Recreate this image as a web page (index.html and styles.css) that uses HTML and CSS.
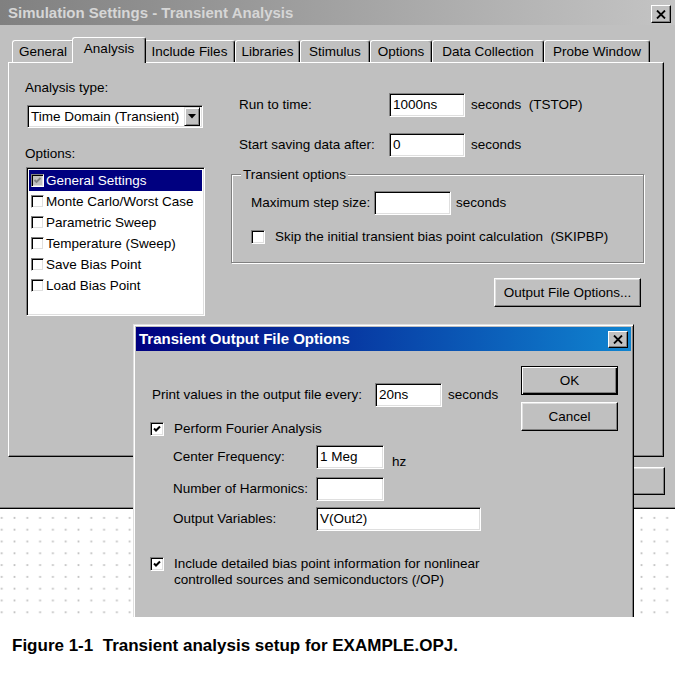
FILE: index.html
```html
<!DOCTYPE html>
<html>
<head>
<meta charset="utf-8">
<link rel="stylesheet" href="styles.css">
</head>
<body>
<div class="screen">
  <div class="main">
    <div class="titlebar inactive">
      <span class="title">Simulation Settings - Transient Analysis</span>
      <span class="close"><svg width="10" height="9" viewBox="0 0 10 9"><path d="M1 0.5 L9 8.5 M9 0.5 L1 8.5" stroke="#000" stroke-width="1.8" fill="none"/></svg></span>
    </div>
    <div class="tabs">
      <div class="tab">General</div>
      <div class="tab active">Analysis</div>
      <div class="tab">Include Files</div>
      <div class="tab">Libraries</div>
      <div class="tab">Stimulus</div>
      <div class="tab">Options</div>
      <div class="tab">Data Collection</div>
      <div class="tab">Probe Window</div>
    </div>
    <div class="panel">
      <div class="col-left">
        <div class="lbl">Analysis type:</div>
        <div class="dropdown">
          <span class="dd-text">Time Domain (Transient)</span>
          <span class="dd-btn"><svg width="8" height="5" viewBox="0 0 8 5"><path d="M0 0 H8 L4 4.5 Z" fill="#000"/></svg></span>
        </div>
        <div class="lbl opt-lbl">Options:</div>
        <div class="listbox">
          <div class="item selected"><span class="cb cb-dis"><svg width="9" height="9" viewBox="0 0 9 9"><path d="M1.5 4 L3.5 6 L7.5 2" stroke="#808080" stroke-width="1.8" fill="none"/></svg></span>General Settings</div>
          <div class="item"><span class="cb"></span>Monte Carlo/Worst Case</div>
          <div class="item"><span class="cb"></span>Parametric Sweep</div>
          <div class="item"><span class="cb"></span>Temperature (Sweep)</div>
          <div class="item"><span class="cb"></span>Save Bias Point</div>
          <div class="item"><span class="cb"></span>Load Bias Point</div>
        </div>
      </div>
      <div class="col-right">
        <div class="row row-run">
          <span class="rlbl">Run to time:</span>
          <span class="field f-run">1000ns</span>
          <span class="suffix">seconds&nbsp; (TSTOP)</span>
        </div>
        <div class="row row-save">
          <span class="rlbl">Start saving data after:</span>
          <span class="field f-run">0</span>
          <span class="suffix">seconds</span>
        </div>
        <div class="group">
          <div class="legend">Transient options</div>
          <div class="row row-step">
            <span class="slbl">Maximum step size:</span>
            <span class="field f-step"></span>
            <span class="suffix s5">seconds</span>
          </div>
          <div class="row row-skip">
            <span class="cb cb14"></span>
            <span class="cblbl">Skip the initial transient bias point calculation&nbsp; (SKIPBP)</span>
          </div>
        </div>
        <div class="btn btn-ofo">Output File Options...</div>
      </div>
    </div>
    <div class="btn-row">
      <div class="btn btn-main"></div>
      <div class="btn btn-main"></div>
      <div class="btn btn-main"></div>
      <div class="btn btn-main"></div>
    </div>
  </div>
  <div class="dots"></div>
  <div class="caption">Figure 1-1&nbsp; Transient analysis setup for EXAMPLE.OPJ.</div>

  <div class="child">
    <div class="titlebar active-tb">
      <span class="title">Transient Output File Options</span>
      <span class="close close-child"><svg width="10" height="9" viewBox="0 0 10 9"><path d="M1 0.5 L9 8.5 M9 0.5 L1 8.5" stroke="#000" stroke-width="1.8" fill="none"/></svg></span>
    </div>
    <div class="child-body">
      <div class="child-left">
        <div class="row row-print">
          <span class="plbl">Print values in the output file every:</span>
          <span class="field f-print">20ns</span>
          <span class="suffix">seconds</span>
        </div>
        <div class="row row-four">
          <span class="cb cb14"><svg width="10" height="10" viewBox="0 0 10 10"><path d="M2 4.5 L4 6.5 L8 2.5" stroke="#000" stroke-width="2" fill="none"/></svg></span>
          <span class="cblbl">Perform Fourier Analysis</span>
        </div>
        <div class="row row-sub row-cf">
          <span class="sublbl">Center Frequency:</span>
          <span class="field f-sub">1 Meg</span>
          <span class="hz">hz</span>
        </div>
        <div class="row row-sub row-nh">
          <span class="sublbl">Number of Harmonics:</span>
          <span class="field f-sub"></span>
        </div>
        <div class="row row-sub row-ov">
          <span class="sublbl">Output Variables:</span>
          <span class="field f-ov">V(Out2)</span>
        </div>
        <div class="row-inc">
          <span class="cb cb14"><svg width="10" height="10" viewBox="0 0 10 10"><path d="M2 4.5 L4 6.5 L8 2.5" stroke="#000" stroke-width="2" fill="none"/></svg></span>
          <span class="inc-text">Include detailed bias point information for nonlinear<br>controlled sources and semiconductors (/OP)</span>
        </div>
      </div>
      <div class="child-right">
        <div class="btn btn-default">OK</div>
        <div class="btn btn-cancel">Cancel</div>
      </div>
    </div>
  </div>
</div>
</body>
</html>
```

FILE: styles.css
```css
* { box-sizing: border-box; }
html, body { margin: 0; padding: 0; }
body {
  width: 675px; height: 673px; overflow: hidden; background: #fff;
  font-family: "Liberation Sans", Arial, sans-serif; font-size: 13.5px; color: #000;
  line-height: 16px;
}
.screen { position: relative; width: 675px; height: 673px; overflow: hidden; }

/* main dialog */
.main {
  height: 509px; background: #c0c0c0;
  border-bottom: 1px solid #000; box-shadow: inset 0 -1px 0 #808080;
  display: flex; flex-direction: column;
}
.titlebar {
  height: 25px; flex: none; display: flex; align-items: center;
  justify-content: space-between; padding: 0 4px 0 8px;
}
.titlebar.inactive { background: linear-gradient(to right, #808080, #c4c4c4); color: #d6d6d6; }
.title { font-weight: bold; font-size: 15px; white-space: nowrap; }
.close {
  width: 20px; height: 18px; margin-top: 3px; background: #c0c0c0;
  border-top: 1px solid #fff; border-left: 1px solid #fff;
  border-right: 1px solid #000; border-bottom: 1px solid #000;
  box-shadow: inset -1px -1px 0 #808080;
  display: flex; align-items: center; justify-content: center;
}

.tabs {
  display: flex; align-items: flex-end; height: 25px; margin-top: 12px;
  padding-left: 12px; position: relative; z-index: 1; flex: none;
}
.tab {
  height: 22px; background: #c0c0c0; white-space: nowrap;
  border-top: 1px solid #fff; border-left: 1px solid #fff; border-right: 1px solid #000;
  box-shadow: inset -1px 0 0 #808080; border-radius: 3px 3px 0 0;
  display: flex; align-items: center; justify-content: center; padding-top: 1px;
}
.tab:nth-child(1) { width: 62px; }
.tab:nth-child(2) { width: 74px; }
.tab:nth-child(3) { width: 91px; }
.tab:nth-child(4) { width: 65px; }
.tab:nth-child(5) { width: 70px; }
.tab:nth-child(6) { width: 62px; }
.tab:nth-child(7) { width: 112px; }
.tab:nth-child(8) { width: 106px; }
.tab.active {
  height: 26px; margin: 0 -2px -1px; position: relative; z-index: 2;
  align-items: flex-start; padding-top: 3px;
}

.panel {
  flex: none; margin-left: 8px; width: 656px; height: 395px;
  border-top: 1px solid #fff; border-left: 1px solid #fff;
  border-right: 1px solid #000; border-bottom: 1px solid #000;
  box-shadow: inset -1px -1px 0 #808080;
  display: flex; padding: 17px 0 0 16px;
}
.col-left { width: 206px; flex: none; display: flex; flex-direction: column; align-items: flex-start; }
.col-right { width: 413px; flex: none; display: flex; flex-direction: column; }

.lbl { height: 16px; white-space: nowrap; }
.opt-lbl { margin-top: 18px; }

.field, .dropdown, .listbox, .cb {
  background: #fff;
  border-top: 1px solid #808080; border-left: 1px solid #808080;
  border-right: 1px solid #fff; border-bottom: 1px solid #fff;
  box-shadow: inset 1px 1px 0 #000, inset -1px -1px 0 #dfdfdf;
}
.dropdown {
  margin-top: 9px; margin-left: 2px; width: 176px; height: 23px;
  display: flex; align-items: center; justify-content: space-between;
  padding: 2px 2px 2px 3px;
}
.dd-text { white-space: nowrap; }
.dd-btn {
  width: 16px; height: 19px; background: #c0c0c0;
  border-top: 1px solid #dfdfdf; border-left: 1px solid #dfdfdf;
  border-right: 1px solid #000; border-bottom: 1px solid #000;
  box-shadow: inset 1px 1px 0 #fff, inset -1px -1px 0 #808080;
  display: flex; align-items: center; justify-content: center;
}

.listbox {
  margin-top: 5px; margin-left: 1px; width: 179px; height: 149px; padding: 2px;
}
.item {
  height: 21px; display: flex; align-items: center; gap: 2px; padding-left: 2px;
  white-space: nowrap;
}
.item.selected { background: #000080; color: #fff; }
.cb { width: 13px; height: 13px; flex: none; display: flex; align-items: center; justify-content: center; }
.cb-dis { background: #c0c0c0; }
.cb14 { width: 14px; height: 14px; }

.row { display: flex; align-items: center; height: 24px; white-space: nowrap; }
.row-run { margin-top: 13px; padding-left: 8px; }
.row-save { margin-top: 16px; padding-left: 8px; }
.rlbl { width: 150px; flex: none; }
.field { height: 24px; flex: none; display: flex; align-items: center; padding: 0 2px 0 3px; white-space: nowrap; }
.f-run { width: 76px; }
.suffix { margin-left: 6px; }
.s5 { margin-left: 5px; }

.group {
  margin-top: 17px; height: 89px;
  border: 1px solid #808080; box-shadow: inset 1px 1px 0 #fff, 1px 1px 0 #fff;
  padding-left: 19px; display: flex; flex-direction: column; align-items: flex-start;
}
.legend {
  margin: -8px 0 0 -10px; padding: 0 2px; background: #c0c0c0; height: 16px; white-space: nowrap;
}
.row-step { margin-top: 8px; }
.slbl { width: 123px; flex: none; }
.f-step { width: 77px; }
.row-skip { margin-top: 14px; height: 16px; }
.cblbl { margin-left: 10px; }

.btn {
  background: #c0c0c0; white-space: nowrap;
  border-top: 1px solid #fff; border-left: 1px solid #fff;
  border-right: 1px solid #000; border-bottom: 1px solid #000;
  box-shadow: inset -1px -1px 0 #808080, inset 1px 1px 0 #dfdfdf;
  display: flex; align-items: center; justify-content: center;
}
.btn-ofo { margin-top: 15px; align-self: flex-end; margin-right: 3px; width: 147px; height: 29px; }

.btn-row {
  flex: none; margin-top: 10px; height: 28px; display: flex; justify-content: flex-end;
  gap: 6px; padding-right: 10px;
}
.btn-main { width: 97px; height: 28px; }

/* below the dialog */
.dots {
  height: 108px;
  background-image: radial-gradient(circle, #c4c4c4 0.8px, rgba(255,255,255,0) 1.3px);
  background-size: 12.8px 11.8px;
  background-position: -4.7px 3px;
}
.caption {
  margin-top: 19px; padding-left: 12px; font-weight: bold; font-size: 17px; line-height: 20px;
  white-space: nowrap;
}

/* child dialog */
.child {
  position: absolute; left: 133px; top: 324px; width: 501px; height: 293px;
  background: #c0c0c0;
  border-top: 1px solid #dfdfdf; border-left: 1px solid #dfdfdf; border-right: 1px solid #000;
  box-shadow: inset 1px 1px 0 #fff, inset -1px 0 0 #808080;
  padding: 2px 2px 0 2px;
}
.titlebar.active-tb {
  height: 24px; padding: 0 3px 0 3px;
  background: linear-gradient(to right, #000080, #1084d0); color: #fff;
}
.close-child { width: 20px; height: 17px; margin-top: 0; }
.child-body { display: flex; }
.child-left { flex: 1; padding-left: 14px; display: flex; flex-direction: column; align-items: flex-start; }
.row-print { margin-top: 32px; margin-left: 2px; }
.plbl { width: 223px; flex: none; }
.f-print { width: 67px; }
.row-four { margin-top: 14px; height: 16px; }
.row-sub { margin-left: 23px; }
.row-cf { margin-top: 8px; }
.row-nh { margin-top: 8px; }
.row-ov { margin-top: 6px; }
.sublbl { width: 143px; flex: none; }
.f-sub { width: 68px; }
.f-ov { width: 165px; }
.hz { margin-left: 8px; margin-top: 10px; }
.row-inc { margin-top: 25px; display: flex; align-items: flex-start; }
.row-inc .cb { margin-top: 1px; }
.inc-text { margin-left: 10px; white-space: nowrap; }
.child-right { width: 110px; flex: none; padding-right: 13px; display: flex; flex-direction: column; }
.btn-default {
  margin-top: 15px; width: 97px; height: 29px;
  border: 1px solid #000;
  box-shadow: inset 1px 1px 0 #fff, inset -1px -1px 0 #000, inset -2px -2px 0 #808080;
}
.btn-cancel { margin-top: 7px; width: 97px; height: 29px; }
```
